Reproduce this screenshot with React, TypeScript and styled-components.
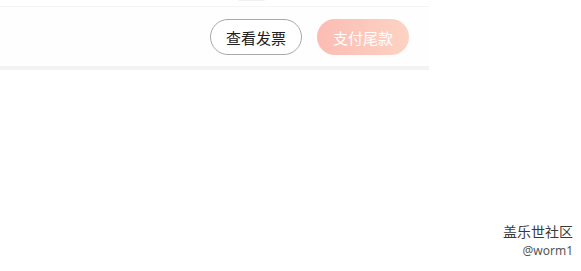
import React from "react";
import styled, { createGlobalStyle } from "styled-components";

const Global = createGlobalStyle`
  html, body { margin: 0; padding: 0; background: #ffffff; }
  body { font-family: "Noto Sans CJK SC", "Noto Sans", sans-serif; }
  #root { width: 581px; height: 271px; position: relative; overflow: hidden; }
`;

const Page = styled.div`
  width: 429px;
  display: flex;
  flex-direction: column;
`;

const TopGap = styled.div`
  height: 6px;
  display: flex;
  align-items: flex-start;
  padding-left: 238px;
`;

const TopMark = styled.div`
  width: 27px;
  height: 1px;
  background: #f1f1f1;
  border-radius: 0 0 4px 4px;
`;

const ActionBar = styled.div`
  height: 60px;
  border-top: 1px solid #f4f4f4;
  background: #fefefe;
  display: flex;
  align-items: center;
  justify-content: flex-end;
  gap: 15px;
  padding: 0 20px 0 0;
  box-sizing: border-box;
`;

const Button = styled.button<{ $primary?: boolean }>`
  width: 92px;
  height: 36px;
  border-radius: 18px;
  box-sizing: border-box;
  font-family: "Noto Sans CJK SC", sans-serif;
  font-size: 15px;
  line-height: 1;
  padding: 0;
  margin-top: 1px;
  display: flex;
  align-items: center;
  justify-content: center;
  cursor: pointer;
  border: ${(p) => (p.$primary ? "none" : "1px solid #a8a8a8")};
  color: ${(p) => (p.$primary ? "#ffffff" : "#222222")};
  background: ${(p) =>
    p.$primary ? "linear-gradient(90deg, #fbbcb3 0%, #fdd3c3 100%)" : "#ffffff"};
`;

const Divider = styled.div`
  height: 4px;
  background: #f3f3f3;
`;

const Watermark = styled.div`
  position: absolute;
  right: 8px;
  bottom: 14px;
  display: flex;
  flex-direction: column;
  align-items: flex-end;
  gap: 6px;
  font-family: "Noto Sans CJK SC", sans-serif;
`;

const WmTitle = styled.div`
  font-size: 14px;
  line-height: 15px;
  color: #3a3a3a;
`;

const WmUser = styled.div`
  font-size: 12px;
  line-height: 12px;
  color: #555555;
  font-family: "Noto Sans", sans-serif;
`;

export default function App() {
  return (
    <>
      <Global />
      <Page>
        <TopGap>
          <TopMark />
        </TopGap>
        <ActionBar>
          <Button>查看发票</Button>
          <Button $primary>支付尾款</Button>
        </ActionBar>
        <Divider />
      </Page>
      <Watermark>
        <WmTitle>盖乐世社区</WmTitle>
        <WmUser>@worm1</WmUser>
      </Watermark>
    </>
  );
}
